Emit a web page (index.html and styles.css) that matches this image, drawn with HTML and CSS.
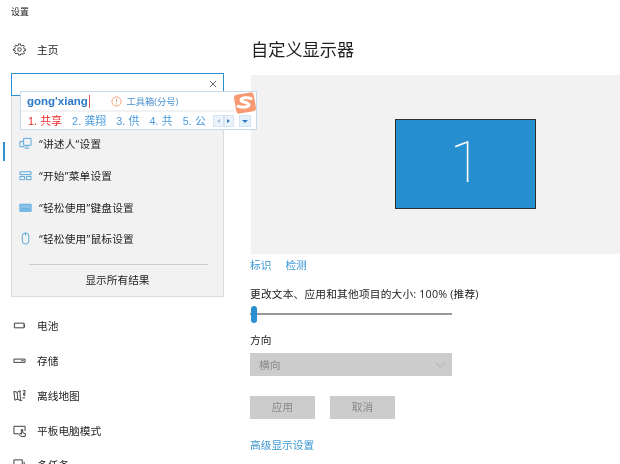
FILE: index.html
```html
<!DOCTYPE html>
<html lang="zh-CN">
<head>
<meta charset="utf-8">
<title>设置</title>
<link rel="stylesheet" href="styles.css">
</head>
<body>
<div class="screen">
  <aside class="sidebar">
    <div class="app-title">设置</div>
    <div class="row home">
      <svg class="icon" viewBox="0 0 14 14"><circle cx="7" cy="7" r="1.9"/><path d="M6 1h2l.3 1.6 1.2.5L10.900 2.200 12.300 3.600l-.9 1.400.5 1.200L13.500 6.500v1.500l-1.600.3-.5 1.200.9 1.400-1.400 1.400-1.400-.9-1.200.5L8 13H6l-.3-1.600-1.200-.5-1.400.9-1.400-1.400.9-1.400-.5-1.200L.5 8V6.500l1.600-.3.5-1.200-.9-1.400L3.100 2.200l1.400.9 1.200-.5z"/></svg>
      <span>主页</span>
    </div>
    <div class="search-wrap">
      <div class="search-box">
        <svg class="clear" viewBox="0 0 9 9"><path d="M1 1l7 7M8 1L1 8"/></svg>
      </div>
      <div class="results">
        <div class="result">
          <svg class="ricon" viewBox="0 0 14 14"><path d="M5 1.500h8v7.500H5zM1 5h4M1 5v5.500h5M8.500 9v2.500M6 12h5"/></svg>
          <span>“讲述人“设置</span>
        </div>
        <div class="result">
          <svg class="ricon" viewBox="0 0 14 14"><path d="M1 3h12v3H1zM1 8h5v3.500H1zM8 8h5v3.500H8z"/></svg>
          <span>“开始”菜单设置</span>
        </div>
        <div class="result">
          <svg class="ricon" viewBox="0 0 14 14"><path class="fill-soft" d="M1 3.500h12v7.500H1z"/><path d="M3 8.500h8"/></svg>
          <span>“轻松使用”键盘设置</span>
        </div>
        <div class="result">
          <svg class="ricon" viewBox="0 0 14 14"><rect x="3.500" y="1" width="7" height="12" rx="3.500"/><path d="M7 1v3"/></svg>
          <span>“轻松使用”鼠标设置</span>
        </div>
        <div class="results-rule"></div>
        <div class="results-all">显示所有结果</div>
      </div>
    </div>
    <nav class="nav">
      <div class="row selected"><svg class="icon" viewBox="0 0 14 14"><path d="M1 2.500h12v8H1zM5 12.500h4"/></svg><span>显示</span></div>
      <div class="row"><svg class="icon" viewBox="0 0 14 14"><path d="M2 5v4h2l4 3V2L4 5z"/></svg><span>声音</span></div>
      <div class="row"><svg class="icon" viewBox="0 0 14 14"><path d="M1 2h12v8H6l-3 2v-2H1z"/></svg><span>通知和操作</span></div>
      <div class="row"><svg class="icon" viewBox="0 0 14 14"><path d="M9 1.500a5.500 5.500 0 1 0 3.500 8A6 6 0 0 1 9 1.500z"/></svg><span>专注助手</span></div>
      <div class="row"><svg class="icon" viewBox="0 0 14 14"><circle cx="7" cy="7" r="5"/></svg><span>电源和睡眠</span></div>
      <div class="row"><svg class="icon" viewBox="0 0 14 14"><path d="M1.500 4.500h10.500v5H1.500zM12 6v2h1"/></svg><span>电池</span></div>
      <div class="row"><svg class="icon" viewBox="0 0 14 14"><path d="M1 5.500h12v3.500H1zM9 7.200h2.500"/></svg><span>存储</span></div>
      <div class="row"><svg class="icon" viewBox="0 0 14 14"><path d="M1 2.500l3.500 1 3-1.500 1 .5M1 2.500L2 12l3-1 3 1.500 2-.5M4.500 3.500L5 11M7.500 2l.5 10.500M10.500 2l2.500-.5-.5 6M11.500 4v3M10 9.500h3"/></svg><span>离线地图</span></div>
      <div class="row"><svg class="icon" viewBox="0 0 14 14"><path d="M6 10.500H1V2.500h12v5M9 6v5l-1.500-1-1 1 2 2.500h4.500l.5-3-3-1V6z"/></svg><span>平板电脑模式</span></div>
      <div class="row"><svg class="icon" viewBox="0 0 14 14"><path d="M1 2h9v7H1zM12 4v7H4"/></svg><span>多任务</span></div>
    </nav>
  </aside>

  <main class="content">
    <h1 class="page-title">自定义显示器</h1>
    <section class="preview">
      <div class="monitor">1</div>
    </section>
    <div class="links">
      <a class="link">标识</a>
      <a class="link">检测</a>
    </div>
    <div class="label scale-label">更改文本、应用和其他项目的大小: 100% (推荐)</div>
    <div class="slider"><span class="thumb"></span></div>
    <div class="label dir-label">方向</div>
    <div class="select">
      <span>横向</span>
      <svg class="chev" viewBox="0 0 12 7"><path d="M1 1l5 5 5-5"/></svg>
    </div>
    <div class="buttons">
      <div class="btn">应用</div>
      <div class="btn">取消</div>
    </div>
    <a class="link advanced">高级显示设置</a>
  </main>

  <div class="ime">
    <div class="ime-top">
      <span class="pinyin">gong'xiang</span><span class="caret"></span>
      <svg class="tip" viewBox="0 0 12 12"><circle cx="6" cy="6" r="5"/><path d="M6 3v3.500M6 8v1.200"/></svg>
      <span class="toolbox">工具箱(分号)</span>
    </div>
    <div class="ime-rule"></div>
    <div class="ime-bottom">
      <span class="cand first">1. 共享</span>
      <span class="cand">2. 龚翔</span>
      <span class="cand">3. 供</span>
      <span class="cand">4. 共</span>
      <span class="cand">5. 公</span>
      <div class="pager">
        <span class="page-btn"><i class="tri-left"></i></span>
        <span class="page-btn"><i class="tri-right"></i></span>
      </div>
      <span class="menu-btn"><i class="tri-down"></i></span>
    </div>
    <svg class="logo" viewBox="0 0 24 22"><rect class="logo-bg" x="2" y="1.500" width="20" height="19" rx="3" transform="rotate(-10 12 11)"/><path class="logo-s" d="M18 6.500c-3-1-9-1.200-10 1.500-.8 2.500 8.500 2 8 5-.5 2.700-7 2.500-11 1.200"/></svg>
  </div>
</div>
</body>
</html>
```
FILE: styles.css
```css
* { box-sizing: border-box; }
html, body { margin: 0; padding: 0; background: #fff; }
.screen {
  position: relative;
  display: flex;
  width: 620px;
  height: 464px;
  overflow: hidden;
  background: #fff;
  color: #222;
  font-family: "Open Sans", "Noto Sans CJK SC", sans-serif;
  font-size: 10.7px;
  filter: blur(0.35px);
}
.sidebar { width: 250px; flex: none; padding-left: 11px; }
.app-title { height: 24px; line-height: 24px; font-size: 9px; }
.row {
  display: flex;
  align-items: center;
  gap: 11px;
  height: 34.8px;
  padding-left: 2px;
  position: relative;
}
.home { margin-top: 8px; }
.icon { width: 13px; height: 13px; flex: none; fill: none; stroke: #333; stroke-width: 1; }
.search-wrap { position: relative; width: 213px; margin-top: 6.200px; }
.search-box {
  height: 23px;
  border: 1.500px solid #2b8fd0;
  background: #fff;
  display: flex;
  align-items: center;
  justify-content: flex-end;
  padding-right: 6px;
}
.clear { width: 8px; height: 8px; fill: none; stroke: #555; stroke-width: 1; }
.results {
  position: absolute;
  top: 23px;
  left: 0;
  right: 0;
  height: 201px;
  z-index: 2;
  background: #f2f2f2;
  border: 1px solid #dcdcdc;
  border-top: 0;
  padding: 32px 0 0 7px;
}
.result { display: flex; align-items: center; gap: 7px; height: 31.700px; letter-spacing: .2px; }
.ricon { width: 13px; height: 13px; flex: none; fill: none; stroke: #4fa3dc; stroke-width: 1; }
.fill-soft { fill: #8cc3e8; }
.results-rule { height: 1px; background: #ccc; width: 179px; margin: 9px 0 0 10px; }
.results-all { margin: 7px 0 0 -7px; text-align: center; line-height: 16px; }
.nav { margin-top: 38.400px; }
.selected::before {
  content: "";
  position: absolute;
  left: -8px;
  top: 8px;
  width: 2px;
  height: 19px;
  background: #2b8fd0;
}
.content { flex: 1; min-width: 0; }
.page-title {
  margin: 38px 0 0 1px;
  height: 37px;
  font-size: 17.200px;
  line-height: 24px;
  font-weight: 400;
  color: #222;
}
.preview {
  margin-left: 1px;
  height: 179px;
  background: #f2f2f2;
  padding: 44px 0 0 144px;
}
.monitor {
  width: 141px;
  height: 90px;
  background: #268fd0;
  border: 1.500px solid #2d2d2d;
  color: #fff;
  font-family: Roboto, sans-serif;
  font-weight: 100;
  font-size: 57px;
  line-height: 86px;
  text-align: center;
}
.links { display: flex; gap: 14px; margin-top: 3px; line-height: 16px; }
.link { color: #3a96d4; }
.label { line-height: 16px; }
.scale-label { margin-top: 13px; white-space: nowrap; letter-spacing: .2px; }
.slider {
  position: relative;
  width: 202px;
  height: 18px;
  margin-top: 3px;
  display: flex;
  align-items: center;
}
.slider::before { content: ""; flex: 1; height: 1.500px; background: #999; }
.thumb {
  position: absolute;
  left: 1px;
  top: 1px;
  width: 6px;
  height: 17px;
  border-radius: 3px;
  background: #2b8fd0;
}
.dir-label { margin-top: 9px; }
.select {
  width: 202px;
  height: 23px;
  margin-top: 5px;
  background: #ccc;
  color: #888;
  display: flex;
  align-items: center;
  justify-content: space-between;
  padding: 0 6px 0 9px;
}
.chev { width: 11px; height: 6px; fill: none; stroke: #aaa; stroke-width: 1; }
.buttons { display: flex; gap: 15px; margin-top: 20px; }
.btn {
  width: 65px;
  height: 23px;
  line-height: 23px;
  background: #ccc;
  color: #888;
  text-align: center;
}
.advanced { display: block; margin-top: 18px; line-height: 16px; }
.ime {
  position: absolute;
  z-index: 3;
  left: 20px;
  top: 91px;
  width: 237px;
  height: 39px;
  background: #fff;
  border: 1px solid #c7d9ea;
}
.ime-top { display: flex; align-items: center; height: 18px; padding-left: 6px; }
.pinyin { color: #2a78c8; font-family: "Liberation Sans", sans-serif; font-weight: 700; font-size: 11.500px; }
.caret { width: 1.500px; height: 13px; background: #e2555a; margin-left: 1px; }
.tip { width: 11px; height: 11px; margin-left: 21px; fill: none; stroke: #f39a6c; stroke-width: 1; }
.toolbox { color: #4a90d0; font-size: 9.300px; margin-left: 4px; }
.ime-rule { height: 2px; background: #f0f2f4; width: 213px; }
.ime-bottom {
  display: flex;
  align-items: center;
  height: 15px;
  padding-left: 7px;
  font-family: "Liberation Sans", "Noto Sans CJK SC", sans-serif;
  font-size: 10.800px;
  color: #4a9ae0;
}
.cand { margin-right: 10px; white-space: nowrap; letter-spacing: .1px; }
.first { color: #ee2d2d; }
.pager {
  position: absolute;
  left: 192px;
  top: 23px;
  display: flex;
  width: 21px;
  height: 12px;
}
.page-btn {
  flex: 1;
  display: flex;
  align-items: center;
  justify-content: center;
  background: #eaf3fb;
  border: 1px solid #d4e4f2;
}
.tri-left { border: 2.500px solid transparent; border-left: 0; border-right: 3px solid #a8bed4; }
.tri-right { border: 2.500px solid transparent; border-right: 0; border-left: 3px solid #3d7fbf; }
.menu-btn {
  position: absolute;
  left: 218px;
  top: 23px;
  width: 12px;
  height: 12px;
  display: flex;
  align-items: center;
  justify-content: center;
  background: #e4f0fa;
  border: 1px solid #d4e4f2;
}
.tri-down { border: 3px solid transparent; border-bottom: 0; border-top: 3px solid #2f7fc5; }
.logo { position: absolute; left: 212px; top: 0; width: 24px; height: 22px; }
.logo-bg { fill: #f79a74; }
.logo-s { fill: none; stroke: #fff; stroke-width: 3; stroke-linecap: round; }
```
